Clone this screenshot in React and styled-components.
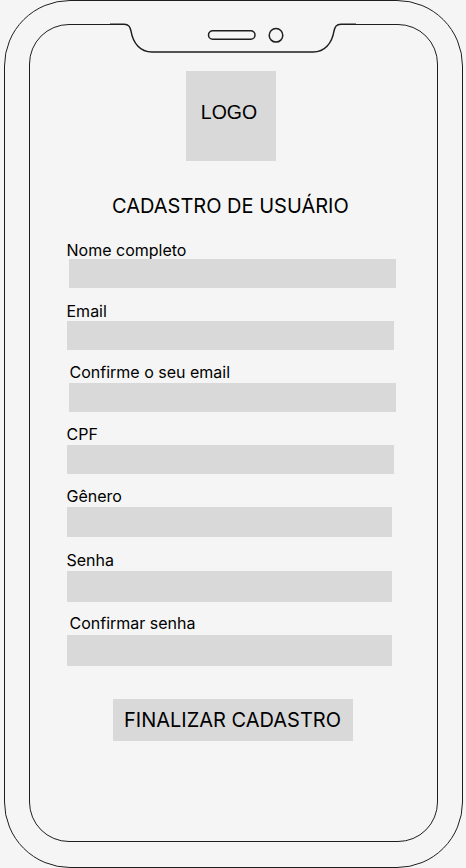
import React from "react";
import styled, { createGlobalStyle } from "styled-components";

const GlobalStyle = createGlobalStyle`
  html, body {
    margin: 0;
    padding: 0;
    background: #f5f5f5;
  }
  body {
    font-family: "Inter", "Noto Sans", sans-serif;
    color: #000;
  }
  * { box-sizing: border-box; }
`;

const Page = styled.div`
  position: relative;
  width: 466px;
  height: 868px;
  background: #f5f5f5;
  padding-left: 4px;
`;

const Phone = styled.div`
  width: 459px;
  height: 868px;
  border: 1.5px solid #1e1e1e;
  border-radius: 66px;
  padding: 22.5px 24px 25.5px 23.5px;
`;

const Screen = styled.div`
  height: 100%;
  border: 1.5px solid #1e1e1e;
  border-radius: 40px;
  display: flex;
  flex-direction: column;
  align-items: flex-start;
  padding: 46px 0 0 37px;
`;

const NotchSvg = styled.svg`
  position: absolute;
  left: 0;
  top: 0;
  pointer-events: none;
`;

const LogoBox = styled.div`
  margin-left: 119.5px;
  width: 90px;
  height: 90px;
  background: #d9d9d9;
  display: flex;
  align-items: center;
  justify-content: center;
  padding-right: 4px;
  padding-bottom: 7px;
  font-family: "Liberation Sans", Arial, sans-serif;
  font-size: 19.5px;
  line-height: 24px;
`;

const Title = styled.h1`
  margin: 33.5px 0 0 45.5px;
  font-family: "Inter", sans-serif;
  font-weight: 400;
  font-size: 20px;
  line-height: 24px;
  white-space: nowrap;
`;

const Field = styled.div`
  display: flex;
  flex-direction: column;
  margin-top: ${(p) => p.$mt}px;
`;

const Label = styled.label`
  font-family: "Inter", sans-serif;
  font-size: 16px;
  line-height: 18px;
  margin-left: ${(p) => p.$dx}px;
  white-space: nowrap;
`;

const Input = styled.div`
  margin-top: ${(p) => p.$gap}px;
  margin-left: ${(p) => p.$dx}px;
  width: ${(p) => p.$w}px;
  height: ${(p) => p.$h}px;
  background: #d9d9d9;
`;

const Button = styled.button`
  margin: 33px 0 0 46px;
  width: 240px;
  height: 42px;
  border: none;
  background: #d9d9d9;
  font-family: "Inter", sans-serif;
  font-size: 20px;
  line-height: 24px;
  color: #000;
  padding: 1px 0 0;
  cursor: pointer;
`;

const fields = [
  { label: "Nome completo", lx: 0, ix: 2, w: 327, h: 29, gap: 0.2, mt: 22.5 },
  { label: "Email", lx: 0, ix: 0, w: 327, h: 29, gap: 0.2, mt: 14.8 },
  { label: "Confirme o seu email", lx: 3, ix: 2, w: 327, h: 29, gap: 1.2, mt: 13.8 },
  { label: "CPF", lx: 0, ix: 0, w: 327, h: 29, gap: 1.2, mt: 13.8 },
  { label: "Gênero", lx: 0, ix: 0, w: 325, h: 30, gap: 1.2, mt: 13.8 },
  { label: "Senha", lx: 0, ix: 0, w: 325, h: 31, gap: 1.2, mt: 14.8 },
  { label: "Confirmar senha", lx: 3, ix: 0, w: 325, h: 31, gap: 2.2, mt: 12.8 },
];

function Notch() {
  return (
    <NotchSvg width="466" height="60" viewBox="0 0 466 60">
      <rect x="112" y="22" width="242" height="5" fill="#f5f5f5" />
      <path
        d="M110 24.25 H124 C129 24.25 130 27 131 31 C133 43 140 52 152 52 H313 C325 52 332 43 334 31 C335 27 336 24.25 341 24.25 H356"
        fill="none"
        stroke="#1e1e1e"
        strokeWidth="1.5"
      />
      <rect x="208.5" y="30.75" width="46.5" height="8.5" rx="4.25" fill="none" stroke="#1e1e1e" strokeWidth="1.5" />
      <circle cx="276" cy="35.3" r="6.8" fill="none" stroke="#1e1e1e" strokeWidth="1.5" />
    </NotchSvg>
  );
}

export default function App() {
  return (
    <>
      <GlobalStyle />
      <Page>
        <Phone>
          <Screen>
            <LogoBox>LOGO</LogoBox>
            <Title>CADASTRO DE USUÁRIO</Title>
            {fields.map((f) => (
              <Field key={f.label} $mt={f.mt}>
                <Label $dx={f.lx}>{f.label}</Label>
                <Input $dx={f.ix} $w={f.w} $h={f.h} $gap={f.gap} />
              </Field>
            ))}
            <Button>FINALIZAR CADASTRO</Button>
          </Screen>
        </Phone>
        <Notch />
      </Page>
    </>
  );
}
